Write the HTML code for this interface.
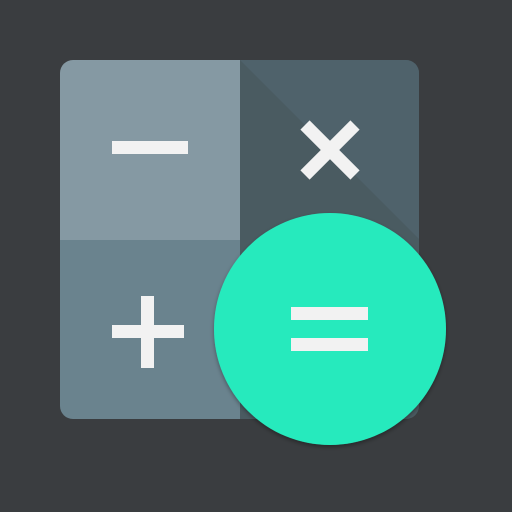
<!DOCTYPE html>
<html><head><meta charset="utf-8"><style>
html,body{margin:0;padding:0;background:#3a3d40;}
svg{display:block}
</style></head><body>
<svg width="512" height="512" viewBox="0 0 512 512">
<defs>
<clipPath id="sq"><rect x="60" y="60" width="359" height="359" rx="13" ry="13"/></clipPath>
<filter id="sh" x="-20%" y="-20%" width="140%" height="140%"><feDropShadow dx="0" dy="2" stdDeviation="2" flood-color="#000" flood-opacity="0.35"/></filter>
</defs>
<rect width="512" height="512" fill="#3a3d40"/>
<g clip-path="url(#sq)">
<rect x="60" y="60" width="180" height="180" fill="#8599a3"/>
<rect x="60" y="240" width="180" height="180" fill="#6a838e"/>
<rect x="240" y="60" width="180" height="360" fill="#4a5b61"/>
<polygon points="240,60 420,60 420,240" fill="#4f626b"/>
</g>
<rect x="112" y="141" width="76" height="13" fill="#f2f2f2"/>
<g stroke="#f2f2f2" stroke-width="13">
<line x1="305" y1="125" x2="355" y2="175"/>
<line x1="355" y1="125" x2="305" y2="175"/>
</g>
<rect x="112" y="325" width="72" height="13" fill="#f2f2f2"/>
<rect x="141" y="296" width="13" height="72" fill="#f2f2f2"/>
<circle cx="330" cy="329" r="116" fill="#28eabd" filter="url(#sh)"/>
<rect x="291" y="307" width="77" height="13" fill="#f2f2f2"/>
<rect x="291" y="338" width="77" height="13" fill="#f2f2f2"/>
</svg>
</body></html>
